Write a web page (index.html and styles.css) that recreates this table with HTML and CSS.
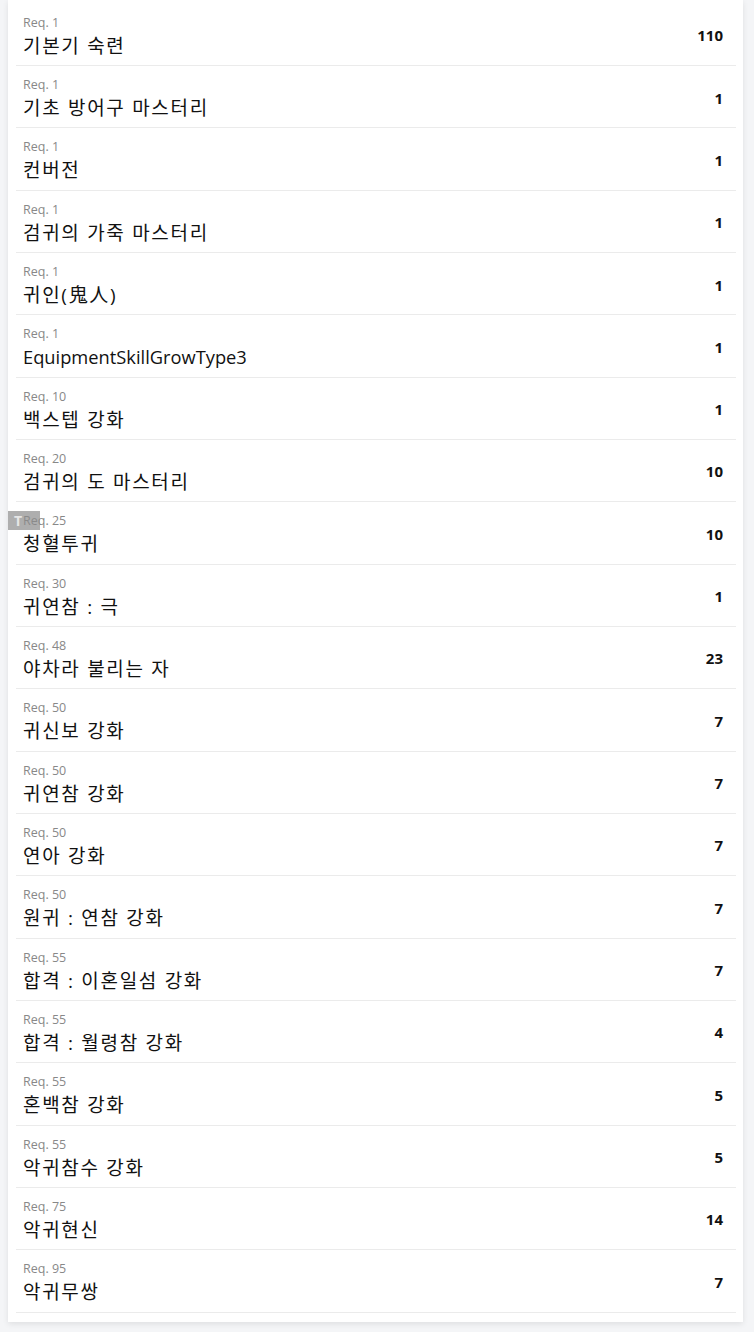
FILE: index.html
```html
<!DOCTYPE html>
<html lang="ko">
<head>
<meta charset="utf-8">
<link rel="stylesheet" href="styles.css">
</head>
<body>
<div class="card">
  <ul class="list">
    <li class="row"><div class="info"><div class="req">Req. 1</div><div class="name">기본기 숙련</div></div><div class="val">110</div></li>
    <li class="row"><div class="info"><div class="req">Req. 1</div><div class="name">기초 방어구 마스터리</div></div><div class="val">1</div></li>
    <li class="row"><div class="info"><div class="req">Req. 1</div><div class="name">컨버전</div></div><div class="val">1</div></li>
    <li class="row"><div class="info"><div class="req">Req. 1</div><div class="name">검귀의 가죽 마스터리</div></div><div class="val">1</div></li>
    <li class="row"><div class="info"><div class="req">Req. 1</div><div class="name">귀인(鬼人)</div></div><div class="val">1</div></li>
    <li class="row"><div class="info"><div class="req">Req. 1</div><div class="name name-latin">EquipmentSkillGrowType3</div></div><div class="val">1</div></li>
    <li class="row"><div class="info"><div class="req">Req. 10</div><div class="name">백스텝 강화</div></div><div class="val">1</div></li>
    <li class="row"><div class="info"><div class="req">Req. 20</div><div class="name">검귀의 도 마스터리</div></div><div class="val">10</div></li>
    <li class="row"><span class="badge">T</span><div class="info"><div class="req">Req. 25</div><div class="name">청혈투귀</div></div><div class="val">10</div></li>
    <li class="row"><div class="info"><div class="req">Req. 30</div><div class="name">귀연참 : 극</div></div><div class="val">1</div></li>
    <li class="row"><div class="info"><div class="req">Req. 48</div><div class="name">야차라 불리는 자</div></div><div class="val">23</div></li>
    <li class="row"><div class="info"><div class="req">Req. 50</div><div class="name">귀신보 강화</div></div><div class="val">7</div></li>
    <li class="row"><div class="info"><div class="req">Req. 50</div><div class="name">귀연참 강화</div></div><div class="val">7</div></li>
    <li class="row"><div class="info"><div class="req">Req. 50</div><div class="name">연아 강화</div></div><div class="val">7</div></li>
    <li class="row"><div class="info"><div class="req">Req. 50</div><div class="name">원귀 : 연참 강화</div></div><div class="val">7</div></li>
    <li class="row"><div class="info"><div class="req">Req. 55</div><div class="name">합격 : 이혼일섬 강화</div></div><div class="val">7</div></li>
    <li class="row"><div class="info"><div class="req">Req. 55</div><div class="name">합격 : 월령참 강화</div></div><div class="val">4</div></li>
    <li class="row"><div class="info"><div class="req">Req. 55</div><div class="name">혼백참 강화</div></div><div class="val">5</div></li>
    <li class="row"><div class="info"><div class="req">Req. 55</div><div class="name">악귀참수 강화</div></div><div class="val">5</div></li>
    <li class="row"><div class="info"><div class="req">Req. 75</div><div class="name">악귀현신</div></div><div class="val">14</div></li>
    <li class="row"><div class="info"><div class="req">Req. 95</div><div class="name">악귀무쌍</div></div><div class="val">7</div></li>
  </ul>
</div>
</body>
</html>
```
FILE: styles.css
```css
html, body {
  margin: 0;
  padding: 0;
}
body {
  background: #f4f5f7;
  font-family: "Open Sans", "Noto Sans CJK KR", sans-serif;
  color: #1a1a1a;
  padding: 0 11px 12px 8px;
}
.card {
  background: #ffffff;
  box-shadow: 0 2px 6px rgba(0, 0, 0, 0.09);
  padding: 3.7px 7px 9px 8px;
}
.list {
  list-style: none;
  margin: 0;
  padding: 0;
}
.row {
  position: relative;
  display: flex;
  align-items: flex-start;
  justify-content: space-between;
  box-sizing: border-box;
  height: 62.33px;
  padding: 0 13px 0 7px;
  border-bottom: 1px solid #ebebeb;
}
.info {
  display: flex;
  flex-direction: column;
  padding-top: 11px;
}
.req {
  font-size: 12.5px;
  line-height: 16px;
  color: #888888;
}
.name {
  font-size: 19px;
  line-height: 26px;
  margin-top: 2px;
  letter-spacing: 1.7px;
  color: #111111;
}
.name-latin {
  font-size: 18.3px;
  letter-spacing: 0;
}
.val {
  font-size: 15px;
  line-height: 20px;
  font-weight: 700;
  color: #111111;
  padding-top: 21.5px;
}
.badge {
  position: absolute;
  left: -8px;
  top: 9px;
  width: 32px;
  height: 19px;
  background: rgba(140, 140, 140, 0.7);
  color: #e6e6e6;
  font-size: 14px;
  font-weight: 700;
  line-height: 19px;
  padding-left: 6px;
  box-sizing: border-box;
}
```
